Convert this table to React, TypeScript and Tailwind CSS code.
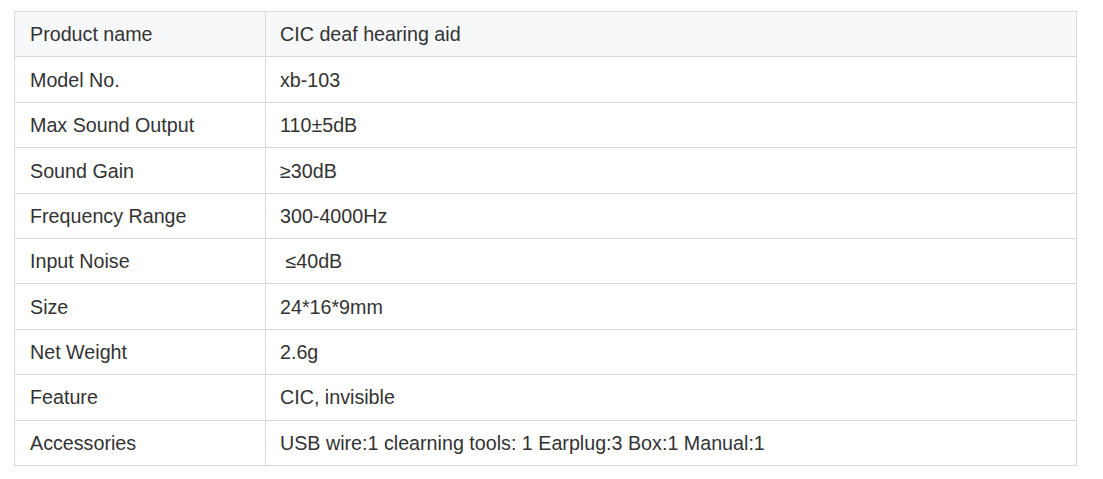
import React from "react";

const rows: [string, string][] = [
  ["Product name", "CIC deaf hearing aid"],
  ["Model No.", "xb-103"],
  ["Max Sound Output", "110±5dB"],
  ["Sound Gain", "≥30dB"],
  ["Frequency Range", "300-4000Hz"],
  ["Input Noise", "\u00a0≤40dB"],
  ["Size", "24*16*9mm"],
  ["Net Weight", "2.6g"],
  ["Feature", "CIC, invisible"],
  ["Accessories", "USB wire:1 clearning tools: 1 Earplug:3 Box:1 Manual:1"],
];

export default function App() {
  return (
    <div
      className="w-[1103px] h-[479px] bg-white pl-[14px] pt-[11px]"
      style={{ fontFamily: '"Liberation Sans", Arial, sans-serif' }}
    >
      <table className="w-[1063px] border-collapse text-[19.7px] text-[#333]">
        <tbody>
          {rows.map(([k, v], i) => (
            <tr key={k} className={`h-[45.4px] ${i === 0 ? "bg-[#f7f8fa]" : "bg-white"}`}>
              <td className="w-[251px] border border-[#d9d9d9] pl-[15px] pr-[15px] pt-[2px] pb-0 align-middle leading-none">
                {k}
              </td>
              <td className="border border-[#d9d9d9] pl-[14px] pr-[14px] pt-[2px] pb-0 align-middle leading-none">
                {v}
              </td>
            </tr>
          ))}
        </tbody>
      </table>
    </div>
  );
}
